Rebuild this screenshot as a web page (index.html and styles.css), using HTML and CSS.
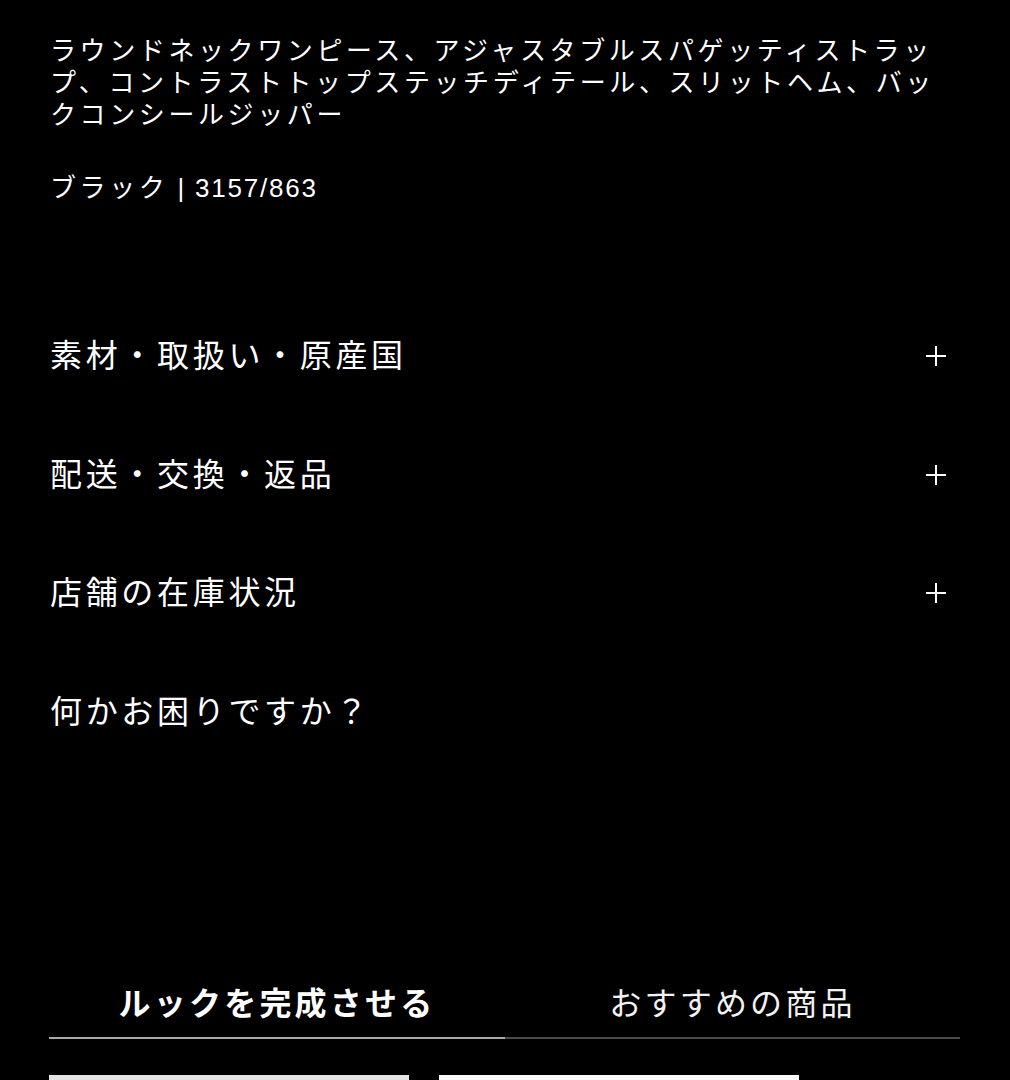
FILE: index.html
```html
<!DOCTYPE html>
<html lang="ja">
<head>
<meta charset="utf-8">
<link rel="stylesheet" href="styles.css">
</head>
<body>
<main class="page">
  <p class="desc">ラウンドネックワンピース、アジャスタブルスパゲッティストラッ<br>プ、コントラストトップステッチディテール、スリットヘム、バッ<br>クコンシールジッパー</p>
  <p class="color"><span class="color-name">ブラック</span> | 3157/863</p>

  <section class="accordion">
    <div class="acc-row">
      <span class="acc-title">素材・取扱い・原産国</span>
      <svg class="plus" viewBox="0 0 20 20" width="20" height="20"><path d="M10 0V20M0 10H20" stroke="#fff" stroke-width="2"/></svg>
    </div>
    <div class="acc-row">
      <span class="acc-title">配送・交換・返品</span>
      <svg class="plus" viewBox="0 0 20 20" width="20" height="20"><path d="M10 0V20M0 10H20" stroke="#fff" stroke-width="2"/></svg>
    </div>
    <div class="acc-row">
      <span class="acc-title">店舗の在庫状況</span>
      <svg class="plus" viewBox="0 0 20 20" width="20" height="20"><path d="M10 0V20M0 10H20" stroke="#fff" stroke-width="2"/></svg>
    </div>
    <div class="acc-row">
      <span class="acc-title">何かお困りですか？</span>
    </div>
  </section>

  <nav class="tabs">
    <div class="tab active">ルックを完成させる</div>
    <div class="tab">おすすめの商品</div>
  </nav>

  <div class="cards">
    <div class="card card-a"></div>
    <div class="card card-b"></div>
  </div>
</main>
</body>
</html>
```
FILE: styles.css
```css
html, body {
  margin: 0;
  padding: 0;
  background: #000;
}

body {
  color: #fff;
  font-family: "Liberation Sans", "Noto Sans CJK JP", sans-serif;
  overflow: hidden;
  text-spacing-trim: space-all;
}

.page {
  padding: 35px 50px 0 50px;
  width: 910px;
}

.desc {
  margin: 0;
  font-size: 26px;
  line-height: 32px;
  letter-spacing: 3.6px;
  white-space: nowrap;
}

.color {
  margin: 41px 0 0 0;
  font-size: 26px;
  line-height: 32px;
  letter-spacing: 1.8px;
}

.color-name {
  letter-spacing: 3.6px;
}

.accordion {
  margin-top: 93px;
  display: flex;
  flex-direction: column;
}

.acc-row {
  height: 118.5px;
  display: flex;
  align-items: center;
  justify-content: space-between;
}

.acc-title {
  font-size: 32px;
  line-height: 40px;
  letter-spacing: 0.115em;
}

.plus {
  margin-right: 14px;
  display: block;
}

.tabs {
  margin-top: 202px;
  display: grid;
  grid-template-columns: 456px 455px;
  margin-left: -1px;
}

.tab {
  height: 56px;
  padding-bottom: 8px;
  display: flex;
  align-items: center;
  justify-content: center;
  font-size: 32px;
  letter-spacing: 0.1em;
  border-bottom: 2px solid #4a4a4a;
  color: #f2f2f2;
}

.tab.active {
  font-weight: bold;
  color: #fff;
  border-bottom-color: #a9a9a9;
}

.cards {
  margin-top: 36px;
  display: flex;
  gap: 30px;
  margin-left: -1px;
}

.card {
  width: 360px;
  height: 480px;
}

.card-a {
  background: #e4e4e4;
}

.card-b {
  background: #fafafa;
}
```
